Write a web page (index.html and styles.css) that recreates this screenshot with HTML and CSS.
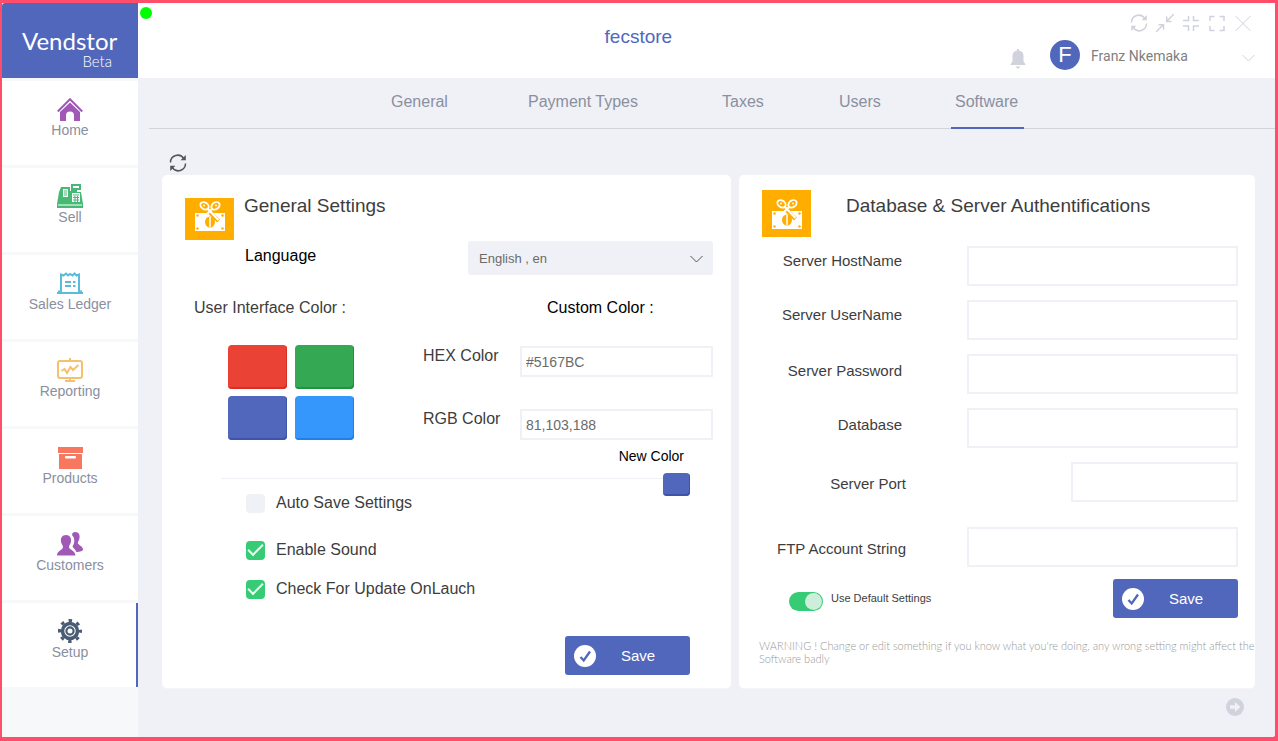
FILE: index.html
```html
<!DOCTYPE html>
<html lang="en">
<head>
<meta charset="utf-8">
<title>Vendstor - Software settings</title>
<link rel="stylesheet" href="styles.css">
</head>
<body>
<svg class="defs" aria-hidden="true">
  <symbol id="refresh" viewBox="0 0 18 18">
    <path d="M1.5 8.5A7.2 7.2 0 0 1 14.8 4.6M16.5 9.5A7.2 7.2 0 0 1 3.2 13.4" fill="none" stroke="currentColor" stroke-width="1.5"/>
    <path d="M16.8 1v5.2h-5.2zM1.2 17v-5.2h5.2z" fill="currentColor"/>
  </symbol>
  <symbol id="voucher" viewBox="0 0 32 30">
    <path d="M1 12h30v18H1z" fill="#fff"/>
    <g fill="#ffae00"><circle cx="3.500" cy="14.500" r="1.200"/><circle cx="28.500" cy="14.500" r="1.200"/><circle cx="3.500" cy="27.500" r="1.200"/><circle cx="28.500" cy="27.500" r="1.200"/><ellipse cx="16" cy="21" rx="5" ry="5.500"/></g>
    <path d="M16 16v10" stroke="#fff" stroke-width="1.500"/>
    <path d="M14 9.500 24.500 20" stroke="#ffae00" stroke-width="4"/>
    <g fill="none" stroke="#fff" stroke-width="1.800"><ellipse cx="10.500" cy="4.800" rx="4.500" ry="3.300" transform="rotate(35 10.500 4.800)"/><ellipse cx="21.500" cy="4.800" rx="4.500" ry="3.300" transform="rotate(-35 21.500 4.800)"/><path d="M18.500 7.500 12 14M13.500 7.500 24.500 19" stroke-width="2.200"/></g>
    <circle cx="10" cy="4.500" r="1" fill="#fff"/><circle cx="22" cy="4.500" r="1" fill="#fff"/>
  </symbol>
  <symbol id="check-circle" viewBox="0 0 22 22">
    <circle cx="11" cy="11" r="11" fill="#fff"/>
    <path d="m6.500 12 3.200 3.500L16 6.500" fill="none" stroke="#5167bc" stroke-width="2.300"/>
  </symbol>
</svg>
<div class="window">
  <aside class="sidebar">
    <div class="brand"><span class="brand-name">Vendstor</span><span class="brand-tag">Beta</span></div>
    <nav class="menu">
      <a class="menu-item" href="#">
        <svg class="menu-icon" viewBox="0 0 26 24" fill="#a05ab5"><path d="M13 5.500 23 15v9h-6v-5.500a4 4 0 0 0-8 0V24H3v-9z"/><path d="M.8 14.500 13 2.200l12.200 12.300" fill="none" stroke="#a05ab5" stroke-width="2"/></svg>
        Home</a>
      <a class="menu-item" href="#">
        <svg class="menu-icon" viewBox="0 0 26 24" fill="#46ba75"><path d="M4 3h9v4h1V5H14V0h10v6h-4v2h4l2 12v4H0v-4L2 8z"/><path d="M16 2h6v2h-6zM6 5h5v8H6zM15 9h8v9h-8zM1 20.500h24v1H1z" fill="#fff"/><path d="M7 7h3M7 9h3M7 11h3M16 11h6M16 13.500h6M16 16h6M18 12v6M20.500 12v6" stroke="#46ba75"/></svg>
        Sell</a>
      <a class="menu-item" href="#">
        <svg class="menu-icon" viewBox="0 0 26 24" fill="none" stroke="#5bbcd9" stroke-width="2"><path d="M4 21V3.500l2.500 1L9 2.500l2 2 2-1.500 2.500 1.500 2-2 2 2 2.500-1V21M0 22h26M1 20.500h3M22 20.500h3"/><path d="M8 11h6M16 11h2.500M8 15h6M16 15h2.500" stroke-width="2"/></svg>
        Sales Ledger</a>
      <a class="menu-item" href="#">
        <svg class="menu-icon" viewBox="0 0 26 24" fill="none" stroke="#f5c171" stroke-width="2"><rect x="1" y="3" width="24" height="17" rx="2"/><path d="M13 0v3M8 23h10M13 20v3"/><path d="m4.500 13 3-2 2.500 4 3.500-6 2.500 3 5.500-5" stroke-width="2"/></svg>
        Reporting</a>
      <a class="menu-item" href="#">
        <svg class="menu-icon" viewBox="0 0 26 24" fill="#f7775f"><path d="M1 2h25v6H1zM2 9h23v15H2z"/><rect x="8" y="11" width="11" height="2.500" rx="1" fill="#fff"/></svg>
        Products</a>
      <a class="menu-item" href="#">
        <svg class="menu-icon" viewBox="0 0 26 24" fill="#a05ab5"><path d="M18 0c4 0 5 3 4.500 6-.3 2.500-1.700 3.500-1.700 5 0 2 5.200 3 5.200 6.500 0 1.500-3 2.500-6.500 2.500C18 17 16 16 15.500 14.500c2-3 3-8-.5-11.500C15 1 16.500 0 18 0z"/><path d="M9 3c4 0 5.500 3 5 6.500-.3 2.500-2 3.500-2 5.500 0 3 6 3 6.500 8.500H0c0-5 6-5.500 6-8.500 0-2-1.700-3-2-5.500C3.500 6 5 3 9 3z"/></svg>
        Customers</a>
      <a class="menu-item menu-item-active" href="#" aria-current="page">
        <svg class="menu-icon" viewBox="0 0 26 24" fill="none" stroke="#4a5b74"><circle cx="13" cy="12" r="10.500" stroke-width="3" stroke-dasharray="3.500 4.747" stroke-dashoffset="1.750"/><circle cx="13" cy="12" r="7.500" stroke-width="3.500"/><circle cx="13" cy="12" r="3.600" stroke-width="2.200"/></svg>
        Setup</a>
    </nav>
  </aside>
  <div class="main">
    <header class="topbar">
      <span class="status-dot"></span>
      <h1 class="store-name">fecstore</h1>
      <div class="actions">
        <div class="window-controls">
          <button class="icon-button" aria-label="Refresh"><svg class="control-icon"><use href="#refresh"/></svg></button>
          <button class="icon-button" aria-label="Collapse"><svg class="control-icon" viewBox="0 0 18 18" fill="none" stroke="currentColor" stroke-width="1.500"><path d="M0 18 7 11M2.500 10.700H7.500V15.500M18 0 11 7M10.700 2.500V7.500H15.500"/></svg></button>
          <button class="icon-button" aria-label="Shrink"><svg class="control-icon" viewBox="0 0 18 18" fill="none" stroke="currentColor" stroke-width="1.500"><path d="M1 6.500h5.500V2M17 6.500h-5.500V2M1 12h5.500v5M17 12h-5.500v5"/></svg></button>
          <button class="icon-button" aria-label="Full screen"><svg class="control-icon" viewBox="0 0 18 18" fill="none" stroke="currentColor" stroke-width="1.500"><path d="M2 7V2.500h4.500M11.500 2.500H16V7M16 12v4.500h-4.500M6.500 16.500H2V12"/></svg></button>
          <button class="icon-button" aria-label="Close"><svg class="control-icon" viewBox="0 0 18 18" fill="none" stroke="currentColor"><path d="m1.500 2 15 15M16.500 2l-15 15"/></svg></button>
        </div>
        <div class="account">
          <button class="icon-button" aria-label="Notifications"><svg class="bell" viewBox="0 0 16 20" fill="currentColor"><path d="M7 0h2v1.500c3 .5 4.500 2.500 4.500 5.500v5c0 1.500 2 1.800 2 4H.5c0-2.200 2-2.500 2-4V7C2.500 4 4 2 7 1.500zM5.500 17.500h5L8 20z"/></svg></button>
          <span class="avatar">F</span>
          <span class="account-name">Franz Nkemaka</span>
          <button class="icon-button account-more" aria-label="Account menu"><svg class="chevron" viewBox="0 0 13 8" fill="none" stroke="currentColor"><path d="m.5 1 6 6 6-6"/></svg></button>
        </div>
      </div>
    </header>
    <nav class="tabs">
      <a class="tab" href="#">General</a>
      <a class="tab" href="#">Payment Types</a>
      <a class="tab" href="#">Taxes</a>
      <a class="tab" href="#">Users</a>
      <a class="tab tab-active" href="#" aria-current="page">Software</a>
    </nav>
    <div class="toolbar"><button class="icon-button reload" aria-label="Reload settings"><svg class="control-icon"><use href="#refresh"/></svg></button></div>
    <main class="cards">
      <form class="card general">
        <div class="general-head">
          <span class="badge badge-general"><svg class="badge-icon"><use href="#voucher"/></svg></span>
          <h2 class="card-title">General Settings</h2>
        </div>
        <div class="language">
          <label class="language-label" for="language">Language</label>
          <div class="select-wrap">
            <select class="select" id="language"><option>English , en</option></select>
            <svg class="chevron select-chevron" viewBox="0 0 13 8" fill="none" stroke="currentColor"><path d="m.5 1 6 6 6-6"/></svg>
          </div>
        </div>
        <div class="colors">
          <section class="palette">
            <h3 class="section-title">User Interface Color :</h3>
            <div class="swatches">
              <button type="button" class="swatch red" aria-label="Red"></button>
              <button type="button" class="swatch green" aria-label="Green"></button>
              <button type="button" class="swatch indigo" aria-label="Indigo"></button>
              <button type="button" class="swatch blue" aria-label="Blue"></button>
            </div>
          </section>
          <section class="custom">
            <h3 class="section-title custom-title">Custom Color :</h3>
            <div class="custom-row"><label class="custom-label" for="hex">HEX Color</label><input class="input" id="hex" type="text" value="#5167BC"></div>
            <div class="custom-row"><label class="custom-label" for="rgb">RGB Color</label><input class="input" id="rgb" type="text" value="81,103,188"></div>
            <p class="new-color">New Color</p>
          </section>
        </div>
        <div class="extras">
          <div class="options">
            <label class="option option-first"><input class="checkbox" type="checkbox">Auto Save Settings</label>
            <label class="option"><input class="checkbox" type="checkbox" checked>Enable Sound</label>
            <label class="option"><input class="checkbox" type="checkbox" checked>Check For Update OnLauch</label>
          </div>
          <button type="button" class="swatch indigo swatch-small" aria-label="New color"></button>
        </div>
        <button type="button" class="save save-general"><svg class="save-icon"><use href="#check-circle"/></svg>Save</button>
      </form>
      <form class="card server">
        <div class="server-head">
          <span class="badge badge-server"><svg class="badge-icon"><use href="#voucher"/></svg></span>
          <h2 class="card-title">Database &amp; Server Authentifications</h2>
        </div>
        <div class="fields">
          <div class="field field-high"><label class="field-label" for="host">Server HostName</label><input class="input field-input" id="host" type="text"></div>
          <div class="field field-high"><label class="field-label" for="user">Server UserName</label><input class="input field-input" id="user" type="text"></div>
          <div class="field"><label class="field-label" for="password">Server Password</label><input class="input field-input" id="password" type="password"></div>
          <div class="field"><label class="field-label" for="database">Database</label><input class="input field-input" id="database" type="text"></div>
          <div class="field field-low"><label class="field-label" for="port">Server Port</label><input class="input field-input field-port" id="port" type="text"></div>
        </div>
        <div class="field field-low field-ftp"><label class="field-label" for="ftp">FTP Account String</label><input class="input field-input" id="ftp" type="text"></div>
        <div class="server-actions">
          <label class="default"><input class="toggle" type="checkbox" role="switch" checked>Use Default Settings</label>
          <button type="button" class="save"><svg class="save-icon"><use href="#check-circle"/></svg>Save</button>
        </div>
        <p class="warning">WARNING ! Change or edit something if you know what you're doing, any wrong setting might affect the Software badly</p>
      </form>
    </main>
    <footer class="footer">
      <button class="icon-button" aria-label="Next page"><svg class="control-icon" viewBox="0 0 18 18"><circle cx="9" cy="9" r="9" fill="currentColor"/><path d="M4 7.300h5V4l5.500 5L9 14v-3.300H4z" fill="#f0f1f6"/></svg></button>
    </footer>
  </div>
</div>
</body>
</html>
```

FILE: styles.css
```css
* { box-sizing: border-box; }

body {
  margin: 0;
  background: #ff4d6a;
  color: #3d3d3d;
  font-family: "Liberation Sans", Arial, sans-serif;
  font-size: 16px;
}

h1, h2, h3, p { margin: 0; font-weight: 400; }
a { color: inherit; text-decoration: none; }
button, input, select { font-family: inherit; margin: 0; }
svg { display: block; }
.defs { position: absolute; width: 0; height: 0; }

.window {
  display: flex;
  min-height: 100vh;
  border: solid #ff4d6a;
  border-width: 3px 3px 4px 2px;
  border-radius: 6px;
  background: #f0f1f6;
}

/* Sidebar */
.sidebar { width: 136px; flex: none; background: #f7f8fa; }
.brand {
  display: flex;
  flex-direction: column;
  height: 75px;
  padding: 25px 20px 0;
  border-radius: 3px 0 0;
  background: #5167bc;
  color: #fff;
  font-family: Lato, sans-serif;
}
.brand-name { font-size: 24px; line-height: 26px; }
.brand-tag { align-self: flex-end; padding-right: 6px; font-size: 15px; line-height: 14px; font-weight: 300; }
.menu { display: flex; flex-direction: column; gap: 3px; padding-top: 3px; }
.menu-item {
  display: flex;
  flex-direction: column;
  align-items: center;
  height: 84px;
  padding-top: 16px;
  background: #fff;
  color: #8a8fa0;
  font-size: 14px;
  line-height: 18px;
}
.menu-item-active { box-shadow: inset -2px 0 #5167bc; }
.menu-icon { width: 26px; height: 24px; }

/* Top bar */
.main { display: flex; flex: 1; flex-direction: column; min-width: 0; }
.topbar {
  display: grid;
  grid-template-columns: 11fr auto 8fr auto;
  height: 75px;
  padding: 4px 20px 0 2px;
  background: #fff;
}
.status-dot { width: 12px; height: 12px; border-radius: 50%; background: #0f0; }
.store-name { padding-top: 18px; color: #5167bc; font-size: 19px; line-height: 24px; }
.actions { grid-column: 4; width: 245px; padding-top: 7px; color: #d0d2dc; }
.window-controls { display: flex; justify-content: flex-end; gap: 8px; padding-right: 3px; }
.icon-button { display: block; padding: 0; border: 0; background: none; color: inherit; }
.control-icon { width: 18px; height: 18px; }
.account { display: flex; align-items: center; padding-top: 7px; }
.bell { width: 16px; height: 20px; margin-top: 8px; }
.avatar {
  width: 30px;
  height: 30px;
  margin: 0 11px 0 24px;
  border-radius: 50%;
  background: #5167bc;
  color: #fff;
  font-size: 22px;
  line-height: 30px;
  text-align: center;
}
.account-name { color: #808080; font-family: Roboto, sans-serif; font-size: 14px; line-height: 30px; padding-top: 2px; white-space: nowrap; }
.account-more { margin: 6px 0 0 auto; }
.chevron { width: 13px; height: 8px; }

/* Tabs */
.tabs {
  display: grid;
  grid-template-columns: 137px 194px 117px 116px 73px;
  height: 51px;
  margin-left: 11px;
  padding-left: 238px;
  border-bottom: 1px solid #d0d2dc;
  color: #8a8fa0;
}
.tab { height: 51px; padding-left: 4px; line-height: 48px; }
.tab-active { border-bottom: 2px solid #5167bc; }
.toolbar { height: 46px; padding: 25px 31px 0; color: #555; }

/* Cards */
.cards { display: grid; grid-template-columns: 569fr 516fr; gap: 8px; padding: 0 20px 0 24px; }
.card { border-radius: 5px; background: #fff; box-shadow: 0 1px 1px #f5f6f9; }
.card-title { font-size: 19px; line-height: 26px; }
.badge { display: grid; place-items: center; width: 49px; background: #ffae00; }
.badge-icon { width: 32px; height: 30px; }

.input {
  width: 100%;
  min-width: 0;
  padding: 0 4px;
  border: 2px solid #f0f1f6;
  background: #fff;
  color: #6b6b6b;
  font-size: 14px;
}

.swatch { width: 59px; height: 44px; padding: 0; border: 0; border-radius: 4px; }
.red { background: #ea4335; box-shadow: inset -1px -2px #d93025; }
.green { background: #34a853; box-shadow: inset -1px -2px #1f9440; }
.indigo { background: #5167bc; box-shadow: inset -1px -2px #3f54a8; }
.blue { background: #3596fb; box-shadow: inset -1px -2px #2080e5; }
.swatch-small { width: 27px; height: 23px; }

.save {
  display: flex;
  align-items: center;
  gap: 25px;
  width: 125px;
  height: 39px;
  padding: 0 9px;
  border: 0;
  border-radius: 3px;
  background: #5167bc;
  color: #fff;
  font-size: 15px;
}
.save-icon { width: 22px; height: 22px; }

/* General settings */
.general { display: flex; flex-direction: column; padding: 18px 18px 13px 23px; }
.general-head { display: flex; align-items: flex-start; gap: 10px; }
.badge-general { height: 42px; margin-top: 5px; padding-bottom: 6px; }
.language { display: flex; justify-content: space-between; padding: 1px 0 0 60px; color: #000; }
.language-label { line-height: 30px; }
.select-wrap { position: relative; width: 245px; }
.select {
  width: 100%;
  height: 34px;
  padding: 0 11px;
  border: 0;
  border-radius: 3px;
  appearance: none;
  background: #f0f1f6;
  color: #6b6b6b;
  font-size: 13px;
}
.select-chevron { position: absolute; top: 14px; right: 10px; color: #555; pointer-events: none; }

.colors { display: flex; justify-content: space-between; margin: 20px 0 0 9px; }
.section-title { font-size: 16px; line-height: 26px; }
.swatches { display: grid; grid-template-columns: auto auto; justify-content: start; gap: 7px 8px; margin: 24px 0 0 34px; }
.custom { width: 290px; }
.custom-title { padding-left: 124px; color: #000; }
.custom-row { display: flex; height: 31px; margin-top: 25px; }
.custom-row + .custom-row { margin-top: 32px; }
.custom-label { flex: none; width: 97px; line-height: 20px; }
.new-color { padding: 8px 29px 0 0; color: #000; font-size: 14px; line-height: 16px; text-align: right; }

.extras { display: flex; align-items: flex-start; margin: 9px 23px 0 36px; }
.options {
  display: flex;
  flex: 1;
  flex-direction: column;
  gap: 15px;
  margin-top: 5px;
  padding: 12px 0 0 25px;
  border-top: 1px solid #f0f1f6;
}
.option { display: flex; align-items: center; gap: 11px; line-height: 24px; }
.option-first { margin-bottom: 8px; }
.checkbox { display: grid; place-items: center; width: 19px; height: 19px; border-radius: 4px; appearance: none; background: #f0f1f6; }
.checkbox:checked { background: #35cc75; }
.checkbox:checked::before {
  content: "";
  width: 13px;
  height: 6px;
  border: solid #e8fff0;
  border-width: 0 0 2px 2px;
  transform: translateY(-2px) rotate(-45deg);
}
.save-general { align-self: flex-end; margin: 35px 23px 0 0; }

/* Server authentication */
.server { padding: 15px 17px 23px 0; }
.server-head { display: flex; align-items: flex-start; gap: 35px; padding-left: 23px; }
.badge-server { height: 47px; }
.server-head .card-title { padding-top: 3px; }
.fields { display: flex; flex-direction: column; gap: 14px; margin-top: 9px; }
.field { display: flex; justify-content: space-between; gap: 65px; height: 40px; }
.field-label { flex: none; width: 163px; font-size: 15px; line-height: 34px; text-align: right; }
.field-high .field-label { line-height: 30px; }
.field-low { gap: 61px; }
.field-low .field-label { width: 167px; line-height: 44px; }
.field-port { width: 167px; }
.field-ftp { margin-top: 25px; }
.server-actions { display: flex; justify-content: space-between; padding: 12px 0 0 50px; }
.default { display: flex; align-items: flex-start; gap: 8px; font-size: 11px; line-height: 38px; }
.toggle { width: 34px; height: 19px; margin-top: 13px; padding: 1px; border-radius: 10px; appearance: none; background: #d0d2dc; }
.toggle::before { content: ""; display: block; width: 17px; height: 17px; border-radius: 50%; background: #cdeedb; }
.toggle:checked { background: #35cc75; }
.toggle:checked::before { margin-left: auto; }
.warning { margin: 21px -20px 0 20px; color: #999; font-family: Lato, sans-serif; font-size: 11px; font-weight: 300; line-height: 13px; }

.footer { display: flex; justify-content: flex-end; padding: 10px 31px 0; color: #d0d2dc; }
```
